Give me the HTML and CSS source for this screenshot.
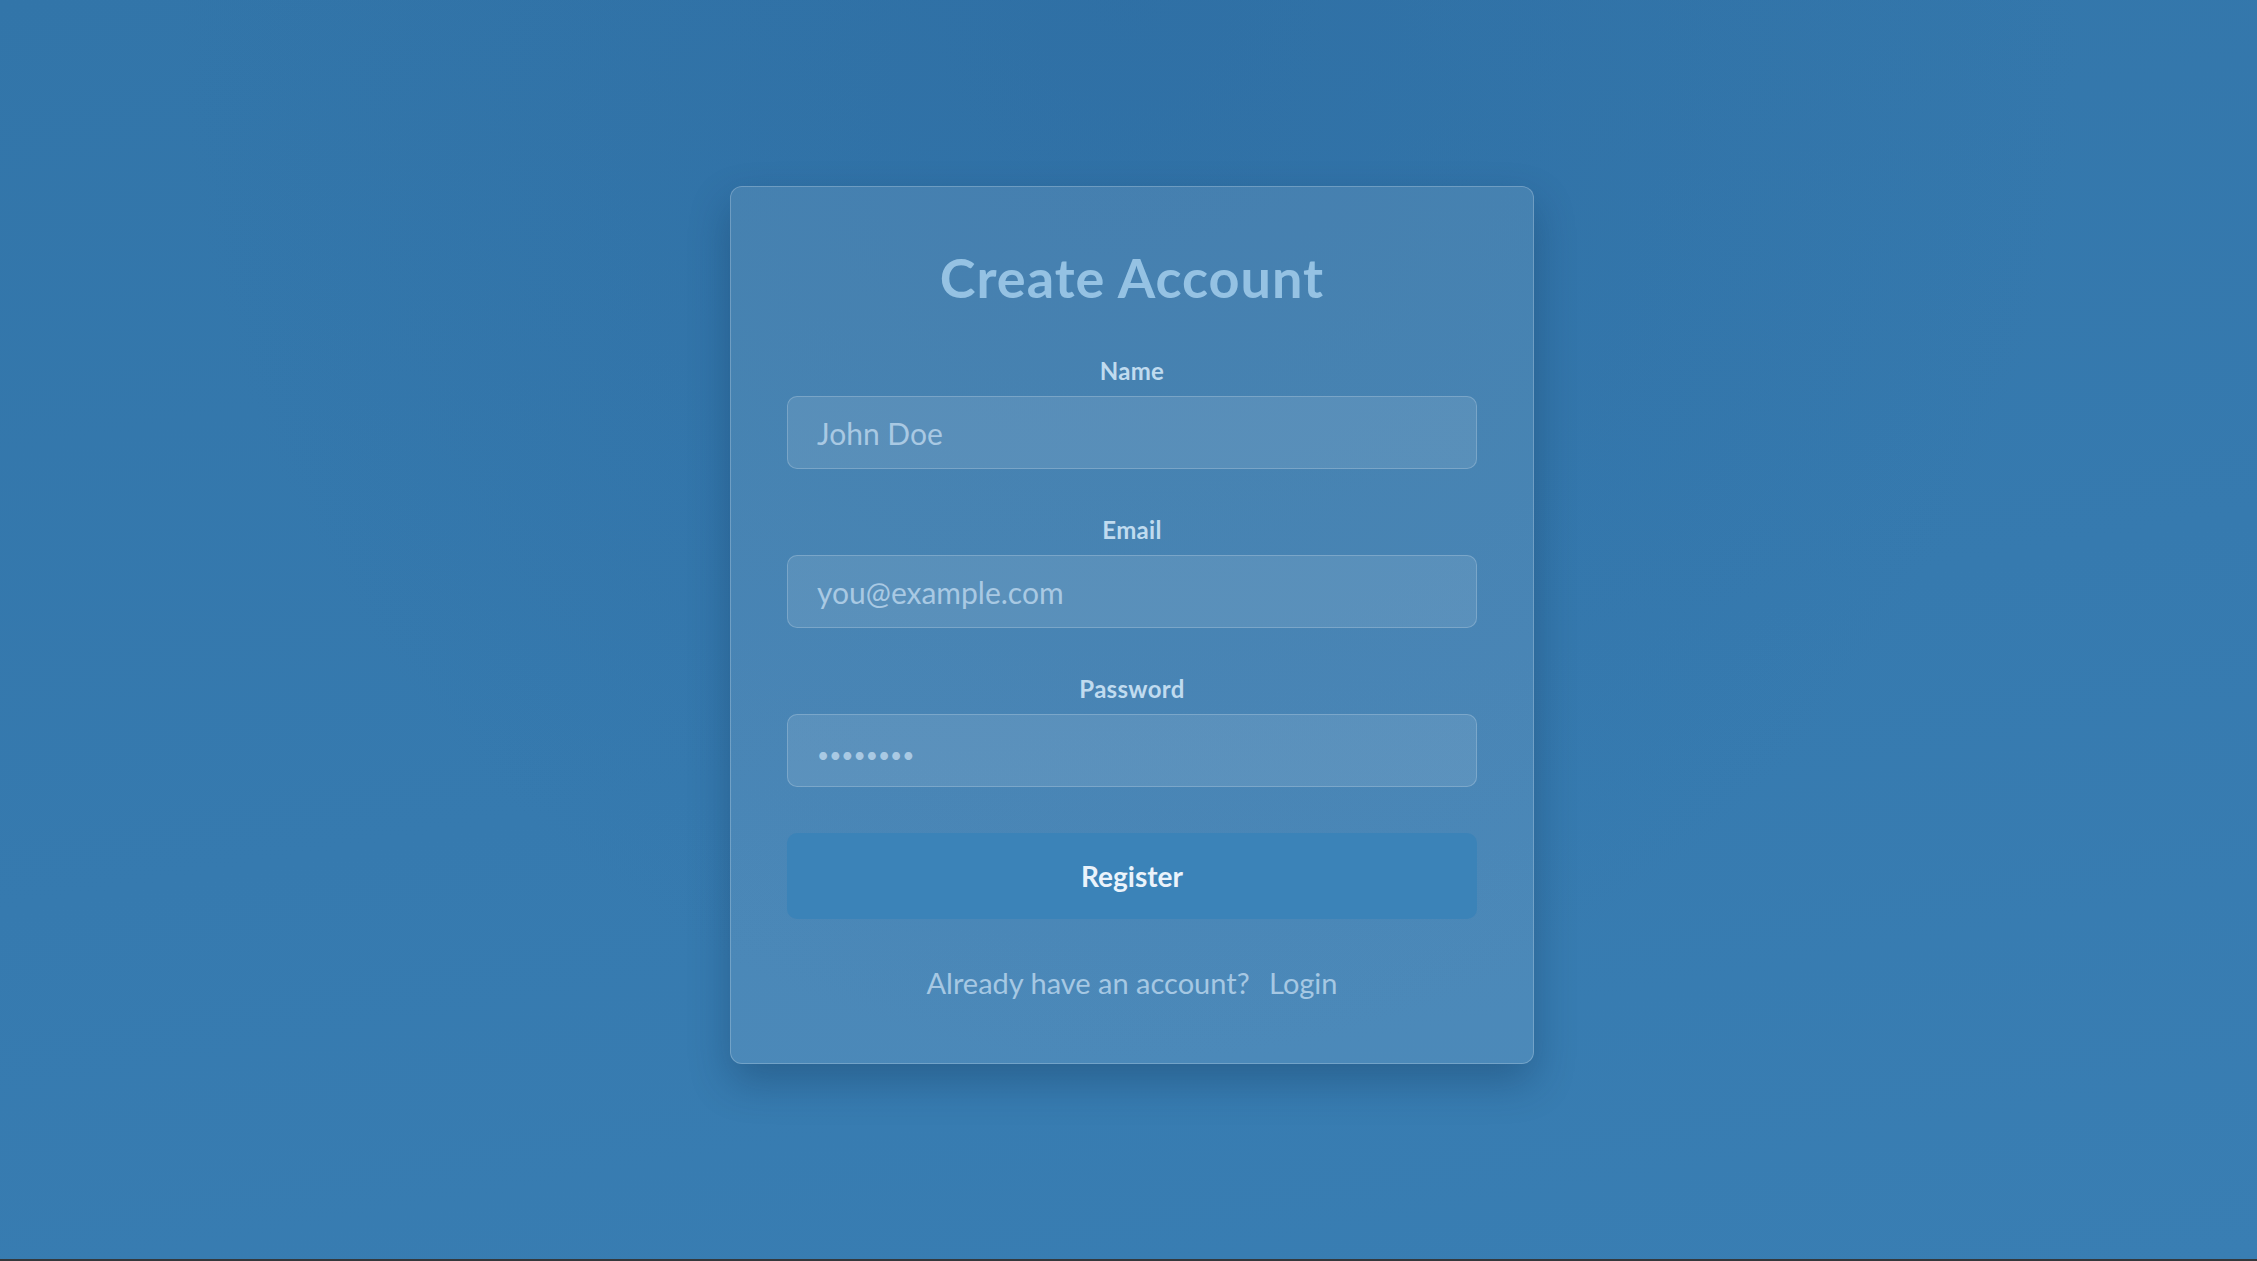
FILE: index.html
```html
<!DOCTYPE html>
<html lang="en">
<head>
<meta charset="utf-8">
<title>Create Account</title>
<link rel="stylesheet" href="styles.css">
</head>
<body>
<main class="page">
  <form class="card" onsubmit="return false">
    <h1 class="title">Create Account</h1>
    <div class="field">
      <label class="label" for="name">Name</label>
      <input class="input" id="name" type="text" placeholder="John Doe">
    </div>
    <div class="field">
      <label class="label" for="email">Email</label>
      <input class="input" id="email" type="email" placeholder="you@example.com">
    </div>
    <div class="field">
      <label class="label" for="password">Password</label>
      <input class="input input-pass" id="password" type="password" placeholder="••••••••">
    </div>
    <button class="btn" type="submit">Register</button>
    <p class="footer">Already have an account? <a class="link" href="#">Login</a></p>
  </form>
</main>
</body>
</html>
```
FILE: styles.css
```css
html {
  background: #34383c;
  height: 100%;
}
body {
  margin: 0;
  font-family: Lato, "Open Sans", "Liberation Sans", sans-serif;
}
.page {
  height: calc(100vh - 2px);
  display: flex;
  align-items: center;
  justify-content: center;
  padding: 0 0 9px 7px;
  box-sizing: border-box;
  background:
    radial-gradient(ellipse at 50% 0%, rgba(40, 100, 155, 0.35), rgba(40, 100, 155, 0) 60%),
    linear-gradient(170deg, #3275a9 0%, #367aaf 55%, #397eb3 100%);
}
.card {
  width: 804px;
  box-sizing: border-box;
  padding: 59px 56px 60px;
  border: 1px solid rgba(255, 255, 255, 0.22);
  border-radius: 12px;
  background: rgba(255, 255, 255, 0.1);
  box-shadow: 0 18px 40px rgba(10, 40, 70, 0.3);
  display: flex;
  flex-direction: column;
}
.title {
  margin: 0 0 46px;
  font-size: 54px;
  line-height: 64px;
  font-weight: 700;
  letter-spacing: 1px;
  color: #95c2e3;
  text-align: center;
}
.field {
  display: flex;
  flex-direction: column;
  margin-bottom: 46px;
}
.label {
  display: block;
  font-size: 24px;
  line-height: 30px;
  font-weight: 700;
  letter-spacing: 0.3px;
  color: #c0dbef;
  text-align: center;
  margin-bottom: 10px;
}
.input {
  height: 73px;
  box-sizing: border-box;
  width: 100%;
  padding: 0 29px;
  border: 1px solid rgba(255, 255, 255, 0.2);
  border-radius: 10px;
  background: rgba(255, 255, 255, 0.1);
  font-family: inherit;
  font-size: 30px;
  color: #e8f2fa;
  outline: none;
}
.input::placeholder {
  color: #a9c9e3;
}
.input-pass::placeholder {
  font-size: 21px;
  letter-spacing: 0;
}
.btn {
  height: 86px;
  border: none;
  border-radius: 10px;
  background: #3b83b8;
  color: #eaf3fb;
  font-family: inherit;
  font-size: 28px;
  font-weight: 700;
  cursor: pointer;
}
.footer {
  margin: 44px 0 0;
  font-size: 29px;
  line-height: 40px;
  color: #a6c8e3;
  text-align: center;
}
.link {
  color: #a6c8e3;
  text-decoration: none;
  margin-left: 12px;
}
```
